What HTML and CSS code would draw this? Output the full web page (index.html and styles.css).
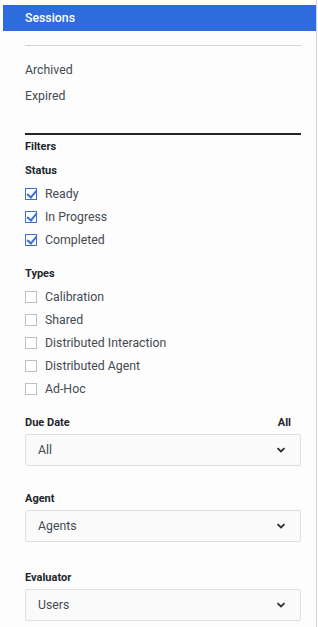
FILE: index.html
```html
<!DOCTYPE html>
<html lang="en">
<head>
    <meta charset="UTF-8">
    <meta name="viewport" content="width=device-width, initial-scale=1.0">
    <title>Sessions</title>
    <link rel="stylesheet" href="styles.css">
</head>
<body>
    <div class="panel">
        <div class="panel-header">Sessions</div>

        <div class="panel-body">
            <hr class="divider">

            <ul class="views">
                <li>Archived</li>
                <li>Expired</li>
            </ul>

            <hr class="divider strong">

            <div class="heading">Filters</div>

            <div class="heading">Status</div>
            <label class="check"><span class="box checked"></span>Ready</label>
            <label class="check"><span class="box checked"></span>In Progress</label>
            <label class="check"><span class="box checked"></span>Completed</label>

            <div class="heading spaced">Types</div>
            <label class="check"><span class="box"></span>Calibration</label>
            <label class="check"><span class="box"></span>Shared</label>
            <label class="check"><span class="box"></span>Distributed Interaction</label>
            <label class="check"><span class="box"></span>Distributed Agent</label>
            <label class="check"><span class="box"></span>Ad-Hoc</label>

            <div class="heading field-label due">
                <span>Due Date</span>
                <span>All</span>
            </div>
            <div class="select">
                <span>All</span>
                <svg class="chevron" width="10" height="6" viewBox="0 0 10 6"><path d="M1.5 1.2 L5 4.5 L8.5 1.2" fill="none" stroke="#2b2f36" stroke-width="1.8"/></svg>
            </div>

            <div class="heading field-label agent">Agent</div>
            <div class="select">
                <span>Agents</span>
                <svg class="chevron" width="10" height="6" viewBox="0 0 10 6"><path d="M1.5 1.2 L5 4.5 L8.5 1.2" fill="none" stroke="#2b2f36" stroke-width="1.8"/></svg>
            </div>

            <div class="heading field-label evaluator">Evaluator</div>
            <div class="select">
                <span>Users</span>
                <svg class="chevron" width="10" height="6" viewBox="0 0 10 6"><path d="M1.5 1.2 L5 4.5 L8.5 1.2" fill="none" stroke="#2b2f36" stroke-width="1.8"/></svg>
            </div>
        </div>
    </div>
</body>
</html>
```

FILE: styles.css
```css
body, html {
    margin: 0;
    padding: 0;
    background: #fdfdfd;
    font-family: Roboto, 'Noto Sans', sans-serif;
    color: #444a52;
    font-size: 12.3px;
}

.panel {
    width: 317px;
    height: 627px;
    border-right: 1px solid #d4d4d4;
    box-sizing: border-box;
    padding-top: 5px;
    overflow: hidden;
}

.panel-header {
    margin-left: 3px;
    width: 313px;
    height: 26px;
    line-height: 26px;
    padding-left: 22px;
    box-sizing: border-box;
    background: #2e6bdc;
    color: #ffffff;
    font-weight: 500;
    font-size: 12.3px;
}

.panel-body {
    padding: 0 15px 0 25px;
}

.divider {
    border: none;
    border-top: 1px solid #d2d2d2;
    margin: 14px 0 0;
}

.divider.strong {
    border-top: 2px solid #22262b;
    margin-top: 24px;
}

.views {
    list-style: none;
    margin: 0;
    padding: 11px 0 0;
}

.views li {
    height: 26px;
    line-height: 26px;
}

.heading {
    height: 20px;
    line-height: 20px;
    font-size: 11px;
    font-weight: bold;
    color: #22262b;
    margin-top: 2px;
}

.heading + .heading {
    margin-top: 4px;
}

.heading.spaced {
    margin-top: 13px;
}

.check {
    display: flex;
    align-items: center;
    height: 23px;
}

.heading + .check {
    margin-top: 1px;
}

.box {
    width: 10px;
    height: 10px;
    border: 1px solid #b9c2cc;
    background: #fff;
    margin-right: 8px;
    position: relative;
}

.box.checked {
    border-color: #3d6fd9;
}

.box.checked::after {
    content: "";
    position: absolute;
    left: 3px;
    top: -1px;
    width: 4px;
    height: 8px;
    border: solid #3d6fd9;
    border-width: 0 2px 2px 0;
    transform: rotate(40deg);
}

.field-label {
    display: flex;
    justify-content: space-between;
    padding-right: 10px;
}

.field-label.due {
    margin-top: 13px;
}

.field-label.agent {
    margin-top: 23px;
}

.field-label.evaluator {
    margin-top: 26px;
}

.select {
    margin-top: 1px;
    height: 32px;
    box-sizing: border-box;
    border: 1px solid #dde1e6;
    border-radius: 2px;
    background: #fafafa;
    display: flex;
    align-items: center;
    justify-content: space-between;
    padding: 0 14px 0 12px;
    font-size: 12.3px;
    color: #444a52;
}
```
